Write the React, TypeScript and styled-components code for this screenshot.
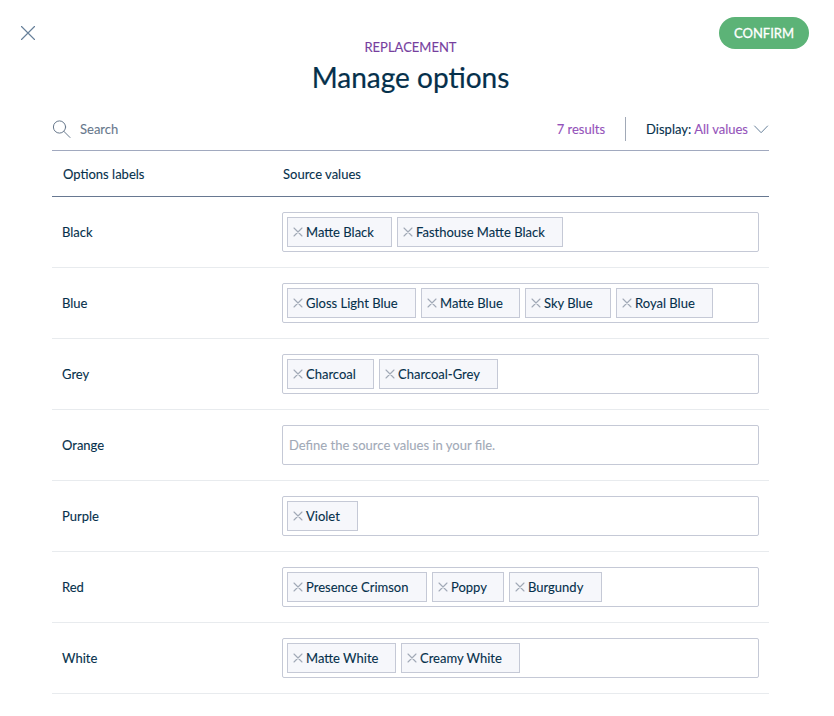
import React from 'react';
import styled, { createGlobalStyle } from 'styled-components';

const Global = createGlobalStyle`
  * { box-sizing: border-box; }
  body { margin: 0; background: #fff; font-family: Lato, sans-serif; font-size: 13px; color: #05304b; -webkit-text-stroke: 0.1px; }
`;
const Page = styled.div`
  width: 834px; height: 716px; overflow: hidden;
  display: flex; flex-direction: column;
`;
const TopBar = styled.header`
  height: 116px; display: grid; grid-template-columns: 100px 1fr 113px; align-items: start;
`;
const CloseButton = styled.button`
  border: 0; background: none; padding: 0; margin: 25px 0 0 20px; width: 16px; height: 16px; display: flex; color: #67809a;
`;
const Heading = styled.div`
  padding: 39px 0 0; text-align: center;
`;
const Crumb = styled.div`
  font-size: 13px; line-height: 16px; color: #763e9e; text-transform: uppercase;
`;
const Title = styled.h1`
  margin: 5px 0 0; font-size: 28px; line-height: 34px; font-weight: 400; -webkit-text-stroke: 0.2px;
`;
const Confirm = styled.button`
  width: 90px; height: 32px; margin: 17px 0 0 -2px; border: 0; border-radius: 16px; background: #5cb377; color: #fff;
  font: 400 13px Lato, sans-serif; padding: 0; -webkit-text-stroke: 0.3px;
`;
const Content = styled.main`
  width: 717px; margin-left: 52px;
`;
const SearchBar = styled.div`
  height: 35px; display: flex; align-items: center; border-bottom: 1px solid #a1a9bf; padding-bottom: 8px;
`;
const SearchText = styled.span`
  margin-left: 9px; flex: 1; color: #67788c;
`;
const Count = styled.span`
  color: #9452ba;
`;
const Divider = styled.span`
  width: 1px; height: 24px; background: #a1a9b7; margin: 0 20px;
`;
const Display = styled.div`
  display: flex; align-items: center; gap: 3px;
`;
const HeaderRow = styled.div`
  height: 46px; display: grid; grid-template-columns: 220px 1fr; align-items: center; border-bottom: 1px solid #677891; padding-left: 11px;
`;
const Row = styled.div`
  height: 71px; display: grid; grid-template-columns: 220px 477px; align-items: center; border-bottom: 1px solid #e8ebee; padding-left: 10px;
`;
const TagInput = styled.div`
  height: 40px; border: 1px solid #c5c9d6; border-radius: 2px; padding: 4px; display: flex; gap: 5px; align-items: center;
`;
const Tag = styled.span<{ $width: number }>`
  width: ${p => p.$width}px; height: 30px; flex: none; border: 1px solid #c5c9d6; background: #f6f7fb; display: flex; align-items: center;
  padding-left: 5px; gap: 3px; white-space: nowrap;
`;
const Placeholder = styled.span`
  color: #a1a9b7; padding-left: 2px;
`;

const TagCross = styled.span`
  display: flex; color: #a1a9b7;
`;

const rows: { label: string; tags: [string, number][] }[] = [
  { label: 'Black', tags: [['Matte Black', 105], ['Fasthouse Matte Black', 166]] },
  { label: 'Blue', tags: [['Gloss Light Blue', 129], ['Matte Blue', 99], ['Sky Blue', 86], ['Royal Blue', 97]] },
  { label: 'Grey', tags: [['Charcoal', 87], ['Charcoal-Grey', 119]] },
  { label: 'Orange', tags: [] },
  { label: 'Purple', tags: [['Violet', 71]] },
  { label: 'Red', tags: [['Presence Crimson', 140], ['Poppy', 72], ['Burgundy', 93]] },
  { label: 'White', tags: [['Matte White', 109], ['Creamy White', 119]] },
];

export default function App() {
  return (
    <Page>
      <Global />
      <TopBar>
        <CloseButton aria-label="Close">
          <svg width="16" height="16" viewBox="0 0 16 16" fill="none" stroke="currentColor" strokeWidth="1.15" strokeLinecap="round">
            <path d="M1.5 1.5l13 13M14.5 1.5l-13 13" />
          </svg>
        </CloseButton>
        <Heading><Crumb>Replacement</Crumb><Title>Manage options</Title></Heading>
        <Confirm>CONFIRM</Confirm>
      </TopBar>
      <Content>
        <SearchBar>
          <svg width="19" height="19" viewBox="0 0 19 19" fill="none" stroke="#67788c" strokeLinecap="round">
            <circle cx="7.5" cy="7" r="6.1" /><path d="M11.8 11.3l6.2 6.2" />
          </svg>
          <SearchText>Search</SearchText>
          <Count>7 results</Count>
          <Divider />
          <Display>
            <span>Display:</span><Count>All values</Count>
            <svg width="18" height="16" viewBox="0 0 18 16" fill="none" stroke="#67809a" strokeLinecap="round" strokeLinejoin="round">
              <path d="M3.6 5l6.5 6.7L16.6 5" />
            </svg>
          </Display>
        </SearchBar>
        <HeaderRow><span>Options labels</span><span>Source values</span></HeaderRow>
        {rows.map(r => (
          <Row key={r.label}>
            <span>{r.label}</span>
            <TagInput>
              {r.tags.length === 0 && <Placeholder>Define the source values in your file.</Placeholder>}
              {r.tags.map(([t, w]) => (
                <Tag key={t} $width={w}>
                  <TagCross>
                    <svg width="10" height="10" viewBox="0 0 10 10" fill="none" stroke="currentColor" strokeWidth="1.1" strokeLinecap="round">
                      <path d="M1 1l8 8M9 1L1 9" />
                    </svg>
                  </TagCross>
                  {t}
                </Tag>
              ))}
            </TagInput>
          </Row>
        ))}
      </Content>
    </Page>
  );
}
